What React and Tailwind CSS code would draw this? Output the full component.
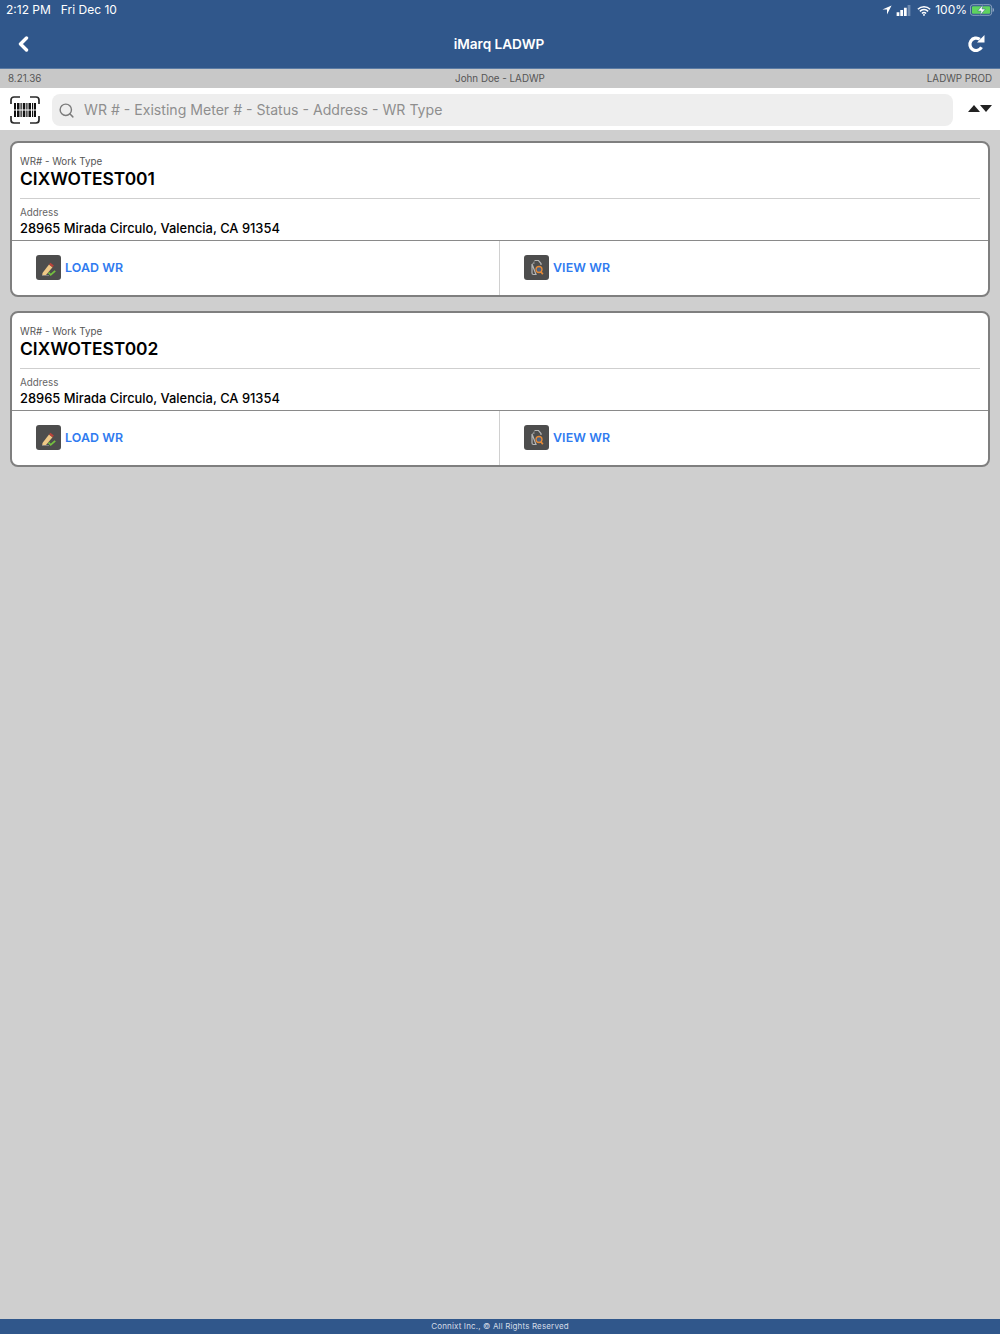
import { Search } from "lucide-react";

const font = "font-['Inter','Liberation_Sans',sans-serif]";

const PencilIcon = () => (
  <svg viewBox="0 0 24 24" className="h-[24px] w-[24px]">
    <path d="M5.500 17 12 8.500l3.500 2.700-6.500 7.800-3.800.6z" fill="#efc987" />
    <path d="M12 8.500l1.400-1.800 3.500 2.700-1.400 1.800z" fill="#b8423a" />
    <path d="M5 19.500h7" stroke="#8c8c8c" strokeWidth="0.800" />
    <path d="M11.500 16.500l2.200 2.300 4.500-4" stroke="#74c23f" strokeWidth="1.800" fill="none" />
  </svg>
);

const ViewIcon = () => (
  <svg viewBox="0 0 24 24" className="h-[24px] w-[24px]">
    <path d="M9.500 4.500h4l2.500 3v1.500M11 18.500H8.500A1.500 1.500 0 0 1 7 17V8z" fill="none" stroke="#b5b5b5" strokeWidth="1.200" />
    <path d="M9.500 4.500 7 8h2.500z" fill="#8a8a8a" />
    <circle cx="14" cy="13.500" r="3" fill="#4a6285" stroke="#e58a35" strokeWidth="1.300" />
    <path d="M16 15.800l1.800 2.400" stroke="#e58a35" strokeWidth="1.700" />
  </svg>
);

const BarcodeIcon = () => (
  <svg viewBox="0 0 30 28" className="h-[28px] w-[30px]">
    <path d="M1 8V4a3 3 0 0 1 3-3h6M20 1h6a3 3 0 0 1 3 3v4M1 20v4a3 3 0 0 0 3 3h6M20 27h6a3 3 0 0 0 3-3v-4" fill="none" stroke="#2a2a2a" strokeWidth="1.700" />
    <path d="M4 7h2v14H4zM7 7h2.500v14H7zM10.500 7h1.200v14h-1.200zM12.800 7h2.500v14h-2.500zM16.300 7h1.200v14h-1.200zM18.500 7h2.500v14h-2.500zM22 7h1.200v14H22zM24 7h2v14h-2z" fill="#111" />
    <path d="M3 14h24" stroke="#fff" strokeWidth="1" />
  </svg>
);

const WorkCard = ({ id }) => (
  <div className="h-[156px] overflow-hidden rounded-[8px] border-2 border-[#7f7f7f] bg-white">
    <div className="px-[8px]">
      <div className="h-[56px] border-b border-[#cfcfcf] pt-[12px]">
        <p className="text-[9.800px] leading-[14px] text-[#555]">WR# - Work Type</p>
        <p className="text-[17.400px] font-semibold leading-[20px] text-black">{id}</p>
      </div>
      <div className="h-[41px] pt-[7px]">
        <p className="text-[9.800px] leading-[14px] text-[#666]">Address</p>
        <p className="text-[12.900px] font-medium leading-[18px] text-black">28965 Mirada Circulo, Valencia, CA 91354</p>
      </div>
    </div>
    <div className="flex h-[55px] border-t border-[#8a8a8a]">
      <div className="flex w-[488px] items-center gap-[4px] border-r border-[#d0d0d0] pl-[24px]">
        <div className="mb-[1px] flex h-[25px] w-[25px] items-center justify-center rounded-[3px] bg-[#4d4d4d]">
          <PencilIcon />
        </div>
        <span className="text-[12.400px] font-semibold tracking-[0.1px] text-[#2f7bf0]">LOAD WR</span>
      </div>
      <div className="flex flex-1 items-center gap-[4px] pl-[24px]">
        <div className="mb-[1px] flex h-[25px] w-[25px] items-center justify-center rounded-[3px] bg-[#4d4d4d]">
          <ViewIcon />
        </div>
        <span className="text-[12.400px] font-semibold tracking-[0.1px] text-[#2f7bf0]">VIEW WR</span>
      </div>
    </div>
  </div>
);

export default function App() {
  return (
    <div className={`${font} flex h-[1334px] w-[1000px] flex-col bg-[#cfcfcf]`}>
      <div className="h-[69px] border-b border-[#5b7ba3] bg-[#30578b] text-white">
        <div className="flex h-[20px] items-center justify-between pl-[6px] pr-[5px] text-[12px] leading-[20px]">
          <div className="flex gap-[10px]">
            <span>2:12 PM</span>
            <span>Fri Dec 10</span>
          </div>
          <div className="flex items-center">
            <svg viewBox="0 0 12 12" className="h-[10px] w-[10px]"><path d="M11.500 0.500 0.500 5.500h5.500V11.500z" fill="#fff" /></svg>
            <svg viewBox="0 0 15 12" className="ml-[4px] h-[11px] w-[15px]">
              <path d="M0 8h3v4H0zM4 5.500h3V12H4zM8 3h3v9H8z" fill="#fff" />
              <path d="M12 0h3v12h-3z" fill="#6f8bb0" />
            </svg>
            <svg viewBox="0 0 16 12" className="ml-[6px] h-[11px] w-[14px]">
              <path d="M1 4.500a10 10 0 0 1 14 0M3.300 7a6.500 6.500 0 0 1 9.400 0M5.700 9.400a3 3 0 0 1 4.600 0" fill="none" stroke="#fff" strokeWidth="1.700" />
              <circle cx="8" cy="11" r="1.100" fill="#fff" />
            </svg>
            <span className="ml-[4px]">100%</span>
            <svg viewBox="0 0 26 12" className="ml-[3px] h-[12px] w-[25px]">
              <rect x="0.500" y="0.500" width="22" height="11" rx="2.500" fill="none" stroke="#8fa5c2" />
              <rect x="2" y="2" width="19" height="8" rx="1.300" fill="#5fd35f" />
              <path d="M23.500 4v4c1 0 1.500-1 1.500-2s-.5-2-1.500-2z" fill="#8fa5c2" />
              <path d="M13.500 0.500 8 7h3.500l-1 4.500L16 5h-3.500z" fill="#fff" stroke="#30578b" strokeWidth="0.500" />
            </svg>
          </div>
        </div>
        <div className="flex h-[48px] items-center justify-between pl-[17px] pr-[15px]">
          <svg viewBox="0 0 12 16" className="h-[16px] w-[12px]">
            <path d="M9.500 2 3.500 8l6 6" fill="none" stroke="#fff" strokeWidth="3.400" strokeLinecap="round" strokeLinejoin="round" />
          </svg>
          <span className="ml-[2px] text-[13.600px] font-semibold">iMarq LADWP</span>
          <svg viewBox="0 0 18 18" className="h-[18px] w-[18px]">
            <path d="M14.500 12.300A6.200 6.200 0 1 1 12.800 4.300" fill="none" stroke="#fff" strokeWidth="3.200" />
            <path d="M10 7.500h7.500V0z" fill="#fff" />
          </svg>
        </div>
      </div>

      <div className="grid h-[19px] grid-cols-3 items-center bg-[#c8c8c8] pl-[8px] pr-[8px] pt-[1px] text-[9.800px] text-[#555]">
        <span>8.21.36</span>
        <span className="text-center">John Doe - LADWP</span>
        <span className="text-right">LADWP PROD</span>
      </div>

      <div className="flex h-[42px] items-center bg-white pl-[10px] pt-[2px]">
        <BarcodeIcon />
        <div className="ml-[12px] flex h-[32px] w-[901px] items-center rounded-[8px] bg-[#eeeeee] pl-[6px]">
          <Search size={17} strokeWidth={2} className="text-[#7b7b7b]" />
          <span className="ml-[9px] text-[14.100px] text-[#8e8e8e]">WR # - Existing Meter # - Status - Address - WR Type</span>
        </div>
        <div className="mb-[3px] ml-[15px] flex">
          <div className="h-0 w-0 border-x-[6.500px] border-b-[7px] border-x-transparent border-b-[#222]" />
          <div className="h-0 w-0 border-x-[6.500px] border-t-[7px] border-x-transparent border-t-[#222]" />
        </div>
      </div>

      <div className="flex flex-1 flex-col gap-[14px] pl-[10px] pr-[10px] pt-[11px]">
        <WorkCard id="CIXWOTEST001" />
        <WorkCard id="CIXWOTEST002" />
      </div>

      <div className="flex h-[15px] items-center justify-center bg-[#30578b] pb-[1px] text-[8px] tracking-[0.15px] text-[#d5dde8]">
        Connixt Inc., © All Rights Reserved
      </div>
    </div>
  );
}
